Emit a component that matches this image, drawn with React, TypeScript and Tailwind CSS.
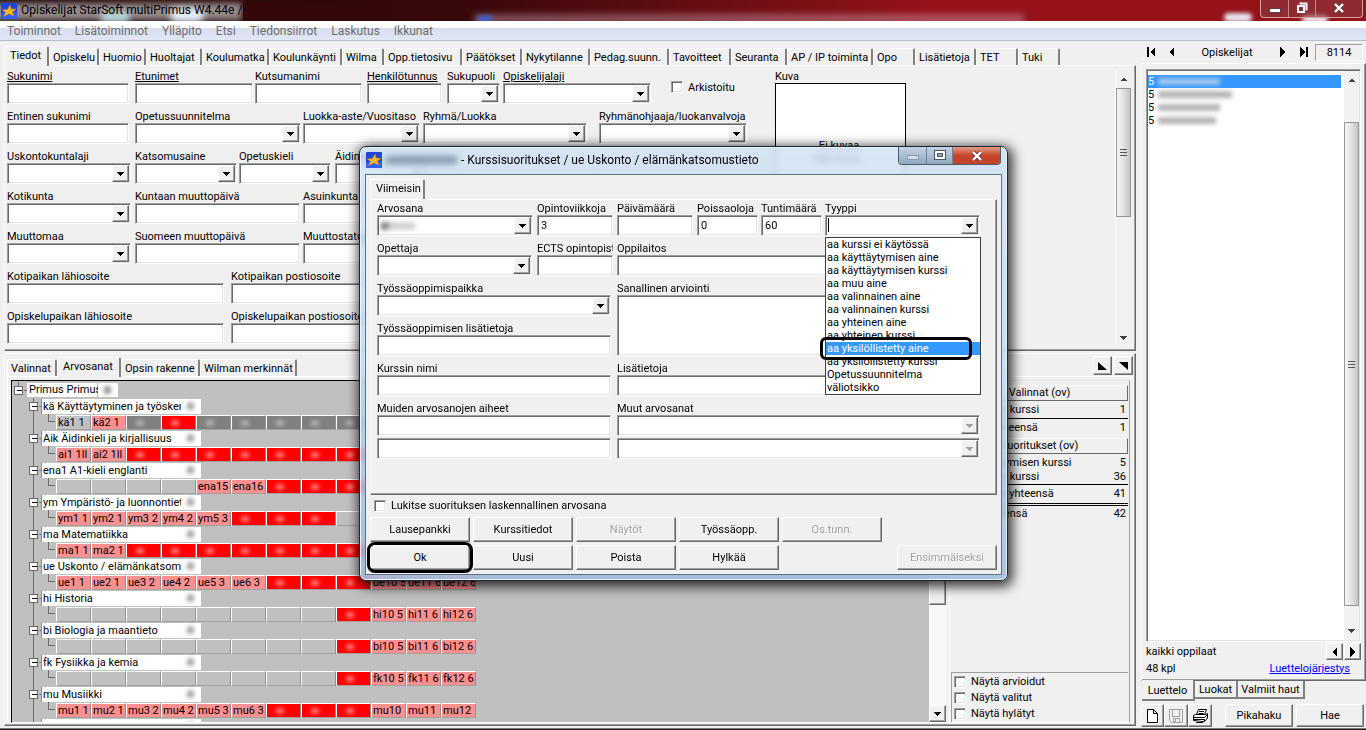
import React, { useId, useState } from 'react';
import clsx from 'clsx';

const SUNKEN = 'border border-t-[#a0a0a0] border-l-[#a0a0a0] border-r-white border-b-white shadow-[inset_1px_1px_#696969,inset_-1px_-1px_#e3e3e3]';
const RAISED = 'border border-t-white border-l-white border-r-[#696969] border-b-[#696969] shadow-[inset_-1px_-1px_#a0a0a0]';

const mainTabs = [
  { label: 'Opiskelu', w: 'w-[50px]' },
  { label: 'Huomio', w: 'w-[47px]' },
  { label: 'Huoltajat', w: 'w-[56px]' },
  { label: 'Koulumatka', w: 'w-[67px]' },
  { label: 'Koulunkäynti', w: 'w-[73px]' },
  { label: 'Wilma', w: 'w-[42px]' },
  { label: 'Opp.tietosivu', w: 'w-[78px]' },
  { label: 'Päätökset', w: 'w-[60px]' },
  { label: 'Nykytilanne', w: 'w-[68px]' },
  { label: 'Pedag.suunn.', w: 'w-[79px]' },
  { label: 'Tavoitteet', w: 'w-[62px]' },
  { label: 'Seuranta', w: 'w-[56px]' },
  { label: 'AP / IP toiminta', w: 'w-[86px]' },
  { label: 'Opo', w: 'w-[42px]' },
  { label: 'Lisätietoja', w: 'w-[61px]' },
  { label: 'TET', w: 'w-[42px]' },
  { label: 'Tuki', w: 'w-[42px]' },
];

const typeOptions = [
  'aa kurssi ei käytössä',
  'aa käyttäytymisen aine',
  'aa käyttäytymisen kurssi',
  'aa muu aine',
  'aa valinnainen aine',
  'aa valinnainen kurssi',
  'aa yhteinen aine',
  'aa yhteinen kurssi',
  'aa yksilöllistetty aine',
  'aa yksilöllistetty kurssi',
  'Opetussuunnitelma',
  'väliotsikko',
];

// '' = empty slot, '#' = completed (red), '=' = disabled (grey), anything else is a course
const subjects = [
  { name: 'kä Käyttäytyminen ja työskentely', cells: ['kä1 1', 'kä2 1', '=', '#', '=', '=', '=', '=', '='] },
  { name: 'Aik Äidinkieli ja kirjallisuus', cells: ['ai1 1ll', 'ai2 1ll', '#', '#', '#', '#', '#', '#', '#'] },
  { name: 'ena1 A1-kieli englanti', cells: ['', '', '', '', 'ena15', 'ena16', '#', '#', '#'] },
  { name: 'ym Ympäristö- ja luonnontieto', cells: ['ym1 1', 'ym2 1', 'ym3 2', 'ym4 2', 'ym5 3', '#', '#', '#', ''] },
  { name: 'ma Matematiikka', cells: ['ma1 1', 'ma2 1', '#', '#', '#', '#', '#', '#', '#'] },
  { name: 'ue Uskonto / elämänkatsomustieto', cells: ['ue1 1', 'ue2 1', 'ue3 2', 'ue4 2', 'ue5 3', 'ue6 3', '#', '#', '#', 'ue10 5', 'ue11 6', 'ue12 6'] },
  { name: 'hi Historia', cells: ['', '', '', '', '', '', '', '', '#', 'hi10 5', 'hi11 6', 'hi12 6'] },
  { name: 'bi Biologia ja maantieto', cells: ['', '', '', '', '', '', '', '', '#', 'bi10 5', 'bi11 6', 'bi12 6'] },
  { name: 'fk Fysiikka ja kemia', cells: ['', '', '', '', '', '', '', '', '#', 'fk10 5', 'fk11 6', 'fk12 6'] },
  { name: 'mu Musiikki', cells: ['mu1 1', 'mu2 1', 'mu3 2', 'mu4 2', 'mu5 3', 'mu6 3', '#', '#', '#', 'mu10', 'mu11', 'mu12'] },
  { name: '', cells: [] },
];

function StarIcon() {
  return (
    <svg width="16" height="16" viewBox="0 0 16 16" className="shrink-0">
      <rect x="0" y="0" width="16" height="16" rx="1" fill="#1f45d8" />
      <path d="M0 11 Q8 6 16 10 V16 H0 Z" fill="#2f62ee" />
      <path d="M9 2 L10 6 L15 6.4 L11.2 9 L13 13 L8.2 10.8 L2.6 13.4 L4.8 9.4 L1.4 7 L6.6 6.4 Z" fill="#ffb820" stroke="#e08a10" strokeWidth="0.5" />
    </svg>
  );
}

function Arrow({ dir, className }: { dir: 'up' | 'down' | 'left' | 'right'; className?: string }) {
  const d = {
    up: 'M0 4 L7 4 L3.5 0.5 Z',
    down: 'M0 0 L7 0 L3.5 4 Z',
    left: 'M5 0 L5 10 L0 5 Z',
    right: 'M0 0 L0 10 L5 5 Z',
  }[dir];
  const flat = dir === 'up' || dir === 'down';
  return (
    <svg width={flat ? 7 : 5} height={flat ? 4 : 10} className={clsx('shrink-0', className)} shapeRendering="crispEdges">
      <path d={d} fill="currentColor" />
    </svg>
  );
}

function ArrowBar({ dir }: { dir: 'left' | 'right' }) {
  return (
    <svg width="8" height="10" className="shrink-0" shapeRendering="crispEdges">
      {dir === 'left' ? <path d="M0 0 H2 V10 H0 Z M8 0 V10 L3 5 Z" /> : <path d="M6 0 H8 V10 H6 Z M0 0 V10 L5 5 Z" />}
    </svg>
  );
}

interface FieldProps {
  label: string;
  cell: string;
  combo?: boolean;
  underline?: boolean;
  value?: string;
  disabled?: boolean;
  masked?: boolean;
}

function ComboBox({ id, label, disabled, masked }: { id?: string; label?: string; disabled?: boolean; masked?: boolean }) {
  return (
    <span className={clsx('relative flex h-[21px] w-full bg-white p-px', SUNKEN)}>
      <select id={id} aria-label={label} disabled={disabled} className="min-w-0 flex-1 appearance-none bg-transparent px-px outline-none" />
      {masked && <i className="pointer-events-none absolute top-[6px] left-[3px] h-[8px] w-[34px] bg-linear-to-r from-[#8c8080] from-15% to-[#d4d4d4] to-30% blur-[2px]" />}
      <span className={clsx('pointer-events-none flex w-[17px] items-center justify-center bg-[#f0f0f0]', RAISED, disabled ? 'text-[#a0a0a0]' : 'text-black')}>
        <Arrow dir="down" />
      </span>
    </span>
  );
}

function Field({ label, cell, combo, underline, value, disabled, masked }: FieldProps) {
  const id = useId();
  return (
    <div className={clsx('flex shrink-0 flex-col', cell)}>
      <label htmlFor={id} className={clsx('h-[13px] overflow-hidden whitespace-nowrap', underline && 'underline')}>{label}</label>
      {combo ? (
        <ComboBox id={id} disabled={disabled} masked={masked} />
      ) : (
        <input id={id} defaultValue={value} className={clsx('h-[21px] w-full bg-white px-[3px] outline-none', SUNKEN)} />
      )}
    </div>
  );
}

function CheckBox({ label, className }: { label: string; className?: string }) {
  return (
    <label className={clsx('flex items-center whitespace-nowrap', className)}>
      <input type="checkbox" className={clsx('mr-[5px] h-[12px] w-[12px] shrink-0 appearance-none bg-white', SUNKEN)} />
      {label}
    </label>
  );
}

function Button({ children, className, disabled }: { children: React.ReactNode; className?: string; disabled?: boolean }) {
  return (
    <button
      disabled={disabled}
      className={clsx('flex items-center justify-center bg-[#f0f0f0]', RAISED, disabled && 'text-[#a0a0a0] [text-shadow:1px_1px_white]', className)}
    >
      {children}
    </button>
  );
}

function Tab({ children, active, className }: { children: React.ReactNode; active?: boolean; className?: string }) {
  return (
    <button
      role="tab"
      aria-selected={!!active}
      className={clsx(
        'shrink-0 overflow-hidden whitespace-nowrap rounded-t-[2px] border-t border-l border-r-2 border-t-white border-l-white border-r-[#808080] bg-[#f0f0f0] text-left',
        active ? 'relative -mb-px h-[20px] px-[5px] pb-[2px]' : 'h-[17px] px-[3px]',
        className
      )}
    >
      {children}
    </button>
  );
}

function ScrollBar({ thumb, offset }: { thumb: string; offset?: string }) {
  return (
    <div className="flex w-[15px] shrink-0 flex-col items-center bg-[#f1f1f1] text-[#404040]">
      <span className="flex h-[18px] items-center"><Arrow dir="up" /></span>
      <span className={clsx('flex w-full flex-col items-center justify-center gap-[2px] border border-[#979797] bg-linear-to-r from-[#f5f5f5] via-[#e2e2e4] to-[#c4c4c8]', thumb, offset)}>
        <i className="h-px w-[7px] bg-[#555]" />
        <i className="h-px w-[7px] bg-[#555]" />
        <i className="h-px w-[7px] bg-[#555]" />
      </span>
      <span className="mt-auto flex h-[18px] items-center"><Arrow dir="down" /></span>
    </div>
  );
}

function TitleBar() {
  return (
    <header className="relative flex h-[22px] shrink-0 items-center overflow-hidden border-b border-white bg-linear-to-r from-[#1c0506] from-0% via-[#3a080b] via-35% to-[#961219] to-68%">
      <div className="absolute -left-2 top-[3px] h-[17px] w-[250px] bg-[#a8a2a2]/85 blur-[3px]" />
      <div className="absolute left-[100px] top-[12px] h-[10px] w-[30px] rounded-full bg-[#b9dbe0] blur-[3px]" />
      <div className="absolute left-[170px] top-[8px] h-[14px] w-[34px] rounded-full bg-[#e4ecfa] blur-[3px]" />
      <div className="absolute left-[474px] top-[14px] h-[10px] w-[550px] bg-[#c9a0b4]/45 blur-[3px]" />
      <div className="absolute left-[478px] top-[16px] h-[6px] w-[14px] bg-[#3f62d8] blur-[2px]" />
      <div className="absolute left-[1224px] top-[13px] h-[9px] w-[28px] rounded-full bg-[#e8e6f4] blur-[2px]" />
      <div className="absolute left-[1302px] top-[15px] h-[8px] w-[26px] rounded-full bg-[#f0e6ee] blur-[2px]" />
      <div className="relative flex items-center gap-[4px] pl-px text-[12px] text-black">
        <StarIcon />
        <h1 className="w-[218px] whitespace-nowrap">Opiskelijat StarSoft multiPrimus W4.44e /</h1>
        <span className="mt-[2px] h-[20px] w-[132px] bg-[#34070a]" />
      </div>
      <div className="relative mr-[3px] mb-[4px] ml-auto flex h-[18px] overflow-hidden rounded-b-[4px] border border-t-0 border-[#d8a0a4] bg-[#8a3a40]/60">
        <button aria-label="Pienennä" className="flex w-[28px] items-center justify-center border-r border-[#c88a8e] pt-[4px]">
          <svg width="12" height="5"><rect x="0.5" y="0.5" width="11" height="4" fill="#fff" stroke="#5b3a42" /></svg>
        </button>
        <button aria-label="Palauta" className="flex w-[27px] items-center justify-center border-r border-[#c88a8e]">
          <svg width="12" height="12" fill="none"><path d="M3.5 1.5 H10.5 V8.5" stroke="#fff" strokeWidth="2" /><rect x="2" y="4" width="6" height="6" stroke="#fff" strokeWidth="2" /><rect x="4" y="6" width="2" height="2" fill="#5b3a42" /></svg>
        </button>
        <button aria-label="Sulje" className="flex w-[46px] items-center justify-center">
          <svg width="12" height="10"><path d="M2 1 L10 9 M10 1 L2 9" stroke="#5b3a42" strokeWidth="4" /><path d="M2 1 L10 9 M10 1 L2 9" stroke="#fff" strokeWidth="2.4" /></svg>
        </button>
      </div>
    </header>
  );
}

function StudentForm() {
  return (
    <section className={clsx('flex pt-[4px] pl-[2px]', RAISED)}>
      <div className="w-[768px] shrink-0 overflow-hidden">
        <div className="flex h-[40px]">
          <Field label="Sukunimi" cell="w-[128px] pr-[6px]" underline />
          <Field label="Etunimet" cell="w-[120px] pr-[2px]" underline />
          <Field label="Kutsumanimi" cell="w-[112px] pr-[5px]" />
          <Field label="Henkilötunnus" cell="w-[80px] pr-[5px]" underline />
          <Field label="Sukupuoli" cell="w-[56px] pr-[3px]" combo />
          <Field label="Opiskelijalaji" cell="w-[168px] pr-[20px]" combo underline />
          <CheckBox label="Arkistoitu" className="mb-[6px]" />
        </div>
        <div className="flex h-[40px]">
          <Field label="Entinen sukunimi" cell="w-[128px] pr-[6px]" />
          <Field label="Opetussuunnitelma" cell="w-[168px] pr-[2px]" combo />
          <Field label="Luokka-aste/Vuositaso" cell="w-[120px] pr-[3px]" combo />
          <Field label="Ryhmä/Luokka" cell="w-[176px] pr-[12px]" combo />
          <Field label="Ryhmänohjaaja/luokanvalvoja" cell="w-[148px]" combo />
        </div>
        <div className="flex h-[40px]">
          <Field label="Uskontokuntalaji" cell="w-[128px] pr-[4px]" combo />
          <Field label="Katsomusaine" cell="w-[104px] pr-[2px]" combo />
          <Field label="Opetuskieli" cell="w-[96px] pr-[4px]" combo />
          <Field label="Äidinkieli" cell="w-[96px] pr-[4px]" combo />
        </div>
        <div className="flex h-[40px]">
          <Field label="Kotikunta" cell="w-[128px] pr-[4px]" combo />
          <Field label="Kuntaan muuttopäivä" cell="w-[168px] pr-[3px]" />
          <Field label="Asuinkunta" cell="w-[128px] pr-[4px]" />
        </div>
        <div className="flex h-[40px]">
          <Field label="Muuttomaa" cell="w-[128px] pr-[4px]" combo />
          <Field label="Suomeen muuttopäivä" cell="w-[168px] pr-[3px]" />
          <Field label="Muuttostatus" cell="w-[128px] pr-[4px]" />
        </div>
        <div className="flex h-[40px]">
          <Field label="Kotipaikan lähiosoite" cell="w-[224px] pr-[7px]" />
          <Field label="Kotipaikan postiosoite" cell="w-[224px] pr-[7px]" />
        </div>
        <div className="flex h-[40px]">
          <Field label="Opiskelupaikan lähiosoite" cell="w-[224px] pr-[7px]" />
          <Field label="Opiskelupaikan postiosoite" cell="w-[224px] pr-[7px]" />
        </div>
      </div>
      <div className="w-[131px] shrink-0">
        <p className="h-[13px]">Kuva</p>
        <div className="flex h-[110px] flex-col items-center justify-center border border-black bg-white pt-[28px]">
          <span>Ei kuvaa.</span>
          <span>Hae kuva...</span>
        </div>
      </div>
      <div className="mr-[4px] mb-[3px] ml-auto flex border-l border-white">
        <ScrollBar thumb="h-[129px]" />
      </div>
    </section>
  );
}

function Toggle({ root }: { root?: boolean }) {
  const x = root ? 2.5 : 17.5;
  return (
    <svg width={root ? 15 : 29} height="16" className="shrink-0" fill="none" shapeRendering="crispEdges">
      {!root && <path d="M21.5 0 V16" stroke="#696969" />}
      {root && <path d="M6.5 0 V4" stroke="#696969" />}
      <path d={`M${x + 9} 8.5 H${x + 12}`} stroke="#696969" />
      <rect x={x} y="4.5" width="8" height="8" fill="#fff" stroke="#696969" />
      <path d={`M${x + 2} 8.5 H${x + 7}`} stroke="#000" />
    </svg>
  );
}

function Cell({ value }: { value: string }) {
  const empty = value === '';
  const done = value === '#';
  const off = value === '=';
  return (
    <span
      className={clsx(
        'h-[15px] w-[35px] shrink-0 overflow-hidden whitespace-nowrap border border-t-white border-l-white border-r-[#909090] border-b-[#a0a0a0] pl-px leading-[14px]',
        empty && 'bg-[#c0c0c0]',
        done && 'bg-[#ff0000]',
        off && 'bg-[#808080]',
        !empty && !done && !off && (value === 'kä1 1' ? 'bg-[#c0c0c0]' : 'bg-[#ff9090]')
      )}
    >
      {done || off ? (
        <i className={clsx('ml-[8px] mt-[4px] block h-[6px] w-[8px] rounded-full blur-[2px]', done ? 'bg-[#ff8080]' : 'bg-[#b5b5b5]')} />
      ) : value}
    </span>
  );
}

function GradeTree() {
  return (
    <div className="flex min-w-0 flex-1 border-t border-b border-l border-t-black border-b-white border-l-black bg-[#c0c0c0]">
      <div className="min-h-0 flex-1 overflow-hidden pt-px">
        <div className="flex h-[16px] items-center">
          <Toggle root />
          <span className="h-[14px] w-[70px] whitespace-nowrap bg-white pl-[2px]">Primus Primus</span>
          <span className="ml-px flex h-[14px] w-[20px] items-center bg-white pl-[6px]"><i className="h-[8px] w-[7px] rounded-full bg-[#8a8a8a] blur-[2px]" /></span>
        </div>
        {subjects.map((s, i) => (
          <React.Fragment key={i}>
            <div className="flex h-[16px] items-center">
              <Toggle />
              <span className="h-[15px] w-[140px] overflow-hidden whitespace-nowrap border-l border-[#909090] bg-white pl-px leading-[15px]">{s.name}</span>
              <span className="flex h-[15px] w-[20px] items-center bg-white pl-[6px]"><i className="h-[8px] w-[7px] rounded-full bg-[#a0a0a8] blur-[2px]" /></span>
            </div>
            <div className="flex h-[16px] items-center">
              <svg width="44" height="16" className="shrink-0" fill="none" stroke="#696969" shapeRendering="crispEdges">
                <path d="M21.5 0 V16 M36.5 0 V7.5 H43" />
              </svg>
              {s.cells.map((c, j) => <Cell key={j} value={c} />)}
            </div>
          </React.Fragment>
        ))}
      </div>
      <div className="flex w-[17px] flex-col bg-[#f8f8f8]">
        <button aria-label="Ylös" className={clsx('flex h-[17px] items-center justify-center bg-[#f0f0f0]', RAISED)}><Arrow dir="up" /></button>
        <span className={clsx('h-[207px] bg-[#f0f0f0]', RAISED)} />
        <button aria-label="Alas" className={clsx('mt-auto flex h-[17px] items-center justify-center bg-[#f0f0f0]', RAISED)}><Arrow dir="down" /></button>
      </div>
    </div>
  );
}

function SummaryRow({ name, count, className }: { name: string; count: number; className?: string }) {
  return (
    <tr className={className}>
      <td className="p-0">{name}</td>
      <td className="p-0 pr-[2px] text-right">{count}</td>
    </tr>
  );
}

function Summary() {
  return (
    <aside className="mr-[3px] ml-[3px] flex w-[181px] shrink-0 flex-col border border-t-[#e3e3e3] border-l-white border-r-[#a0a0a0] border-b-white px-px pt-[4px]">
      <h2 className="h-[16px] border border-t-white border-l-white border-r-[#696969] border-b-[#696969] text-center">Valinnat (ov)</h2>
      <table className="mt-px w-full border-collapse leading-[13px]">
        <tbody>
          <SummaryRow name="aa yhteinen kurssi" count={1} className="h-[16px] border-b border-black" />
          <SummaryRow name="Valinnat yhteensä" count={1} className="h-[19px]" />
        </tbody>
      </table>
      <h2 className="mt-px h-[16px] border border-t-white border-l-white border-r-[#696969] border-b-[#696969] text-center">Suoritukset (ov)</h2>
      <table className="mt-[2px] w-full border-collapse leading-[13px]">
        <tbody>
          <SummaryRow name="aa käyttäytymisen kurssi" count={5} className="h-[13px]" />
          <SummaryRow name="aa yhteinen kurssi" count={36} className="h-[15px] border-b border-black" />
          <SummaryRow name="Suoritukset yhteensä" count={41} className="h-[20px] border-b-3 border-double border-black" />
          <SummaryRow name="Kaikki yhteensä" count={42} className="h-[18px]" />
        </tbody>
      </table>
      <div className="mt-auto flex flex-col gap-[3px] border-t border-l border-[#a0a0a0] py-[2px] pl-[2px]">
        <CheckBox label="Näytä arvioidut" className="h-[13px]" />
        <CheckBox label="Näytä valitut" className="h-[13px]" />
        <CheckBox label="Näytä hylätyt" className="h-[13px]" />
      </div>
    </aside>
  );
}

function StudentList() {
  const blurred = ['w-[62px]', 'w-[74px]', 'w-[62px]', 'w-[58px]'];
  return (
    <aside className="flex w-[225px] shrink-0 flex-col pt-[2px]">
      <div className="flex h-[18px] items-center pr-[3px] pl-[6px]">
        <button aria-label="Ensimmäinen"><ArrowBar dir="left" /></button>
        <button aria-label="Edellinen" className="ml-[14px]"><Arrow dir="left" /></button>
        <span className="flex-1 text-center">Opiskelijat</span>
        <button aria-label="Seuraava" className="mr-[15px]"><Arrow dir="right" /></button>
        <button aria-label="Viimeinen" className="mr-[7px]"><ArrowBar dir="right" /></button>
        <span className="h-[17px] w-[48px] border border-t-[#a0a0a0] border-l-[#a0a0a0] border-r-white border-b-white text-center leading-[16px]">8114</span>
      </div>
      <div className={clsx('mt-[2px] flex min-h-0 flex-1 flex-col px-[4px] pt-[5px] pb-[4px]', RAISED)}>
        <div className={clsx('flex min-h-0 flex-1 bg-white p-px', SUNKEN)}>
          <ul className="min-w-0 flex-1 pt-[4px] pr-[3px]">
            {blurred.map((w, i) => (
              <li key={i} className={clsx('flex h-[13px] items-center gap-[4px]', i === 0 && 'bg-[#3399ff] text-white')}>
                5
                <i className={clsx('flex h-[7px] blur-[2px]', w, i === 0 ? 'bg-[#a3c6ee]' : 'bg-[#b4b4b4]')} />
              </li>
            ))}
          </ul>
          <ScrollBar thumb="flex-1" offset="mt-[33px] mb-[16px]" />
        </div>
        <div className="mt-px flex h-[17px] items-center">
          <span className="flex-1">kaikki oppilaat</span>
          <Button className="h-[17px] w-[17px]"><Arrow dir="left" /></Button>
          <Button className="ml-px h-[17px] w-[17px]"><Arrow dir="right" /></Button>
        </div>
        <div className="flex h-[16px] items-center justify-between pr-[11px]">
          <span>48 kpl</span>
          <a href="#jarjestys" className="text-[#0000ff] underline">Luettelojärjestys</a>
        </div>
      </div>
      <div className="flex h-[21px] pl-px" role="tablist">
        <button role="tab" aria-selected="true" className="relative -mt-px h-[21px] w-[53px] border-r-2 border-b-2 border-[#808080] bg-[#f0f0f0] pt-[2px]">Luettelo</button>
        <button role="tab" aria-selected="false" className="h-[18px] w-[43px] border-r-2 border-b-2 border-[#808080]">Luokat</button>
        <button role="tab" aria-selected="false" className="h-[18px] w-[67px] border-r-2 border-b-2 border-[#808080]">Valmiit haut</button>
      </div>
      <div className="mt-px flex h-[25px] items-center pr-[2px]">
        <Button className="h-[23px] w-[23px]">
          <svg width="11" height="14" fill="#fff" stroke="#000"><path d="M0.5 0.5 H6.5 L10.5 4.5 V13.5 H0.5 Z M6.5 0.5 V4.5 H10.5" /></svg>
        </Button>
        <Button className="h-[23px] w-[24px]" disabled>
          <svg width="14" height="14" fill="none" stroke="#a0a0a0"><path d="M0.5 0.5 H13.5 V13.5 H2.5 L0.5 11.5 Z M3.5 0.5 V7.5 H10.5 V0.5 M4.5 13.5 V9.5 H10.5 V13.5 M6.5 10 V13" /></svg>
        </Button>
        <Button className="h-[23px] w-[24px]">
          <svg width="16" height="14" fill="#fff" stroke="#000"><path d="M4.5 5.5 L6.5 0.5 H14.5 L12.5 5.5" /><path d="M7 2.5 H12 M6.5 4.5 H11.5" /><path d="M1.5 6.5 L3.5 5.5 H13.5 L15.5 4.5 V9 L12.5 12.5 L1.5 11.5 Z" /><path d="M1 8.5 H12.5 L15 6 M1 10.5 H12.5 V12" /><path d="M4 13.5 H11" /></svg>
        </Button>
        <Button className="ml-[13px] h-[23px] flex-1">Pikahaku</Button>
        <Button className="ml-[3px] h-[23px] flex-1">Hae</Button>
      </div>
    </aside>
  );
}

function CourseDialog() {
  const [selected, setSelected] = useState('aa yksilöllistetty aine');
  const typeId = useId();
  const noteId = useId();
  return (
    <div
      role="dialog"
      aria-label="Kurssisuoritukset"
      className="absolute top-[146px] left-[359px] w-[649px] rounded-[7px] border border-[#1f262d] bg-linear-to-b from-[#cfe0f2]/80 via-[#bddcfb]/85 to-[#9fbcdc]/85 px-[5px] pb-[5px] shadow-[2px_3px_12px_3px_rgba(0,0,0,0.75),inset_0_0_0_1px_#e8f4ff] backdrop-blur-[3px]"
    >
      <div className="flex h-[27px] items-start">
        <div className="flex h-[26px] items-center gap-[4px] pl-px text-[12px]">
          <StarIcon />
          <i className="h-[8px] w-[71px] bg-[#8296ac] blur-[3px]" />
          <h2 className="whitespace-nowrap">- Kurssisuoritukset / ue Uskonto / elämänkatsomustieto</h2>
        </div>
        <div className="mr-px ml-auto flex h-[18px] overflow-hidden rounded-b-[4px] border border-t-0 border-[#4c5d70]">
          <button aria-label="Pienennä" className="flex w-[28px] items-center justify-center border-r border-[#6e8298] bg-linear-to-b from-[#c2d2e2] to-[#93a9c0] pt-[4px]">
            <svg width="12" height="5"><rect x="0.5" y="0.5" width="11" height="4" fill="#d4dde6" stroke="#8a9cae" /></svg>
          </button>
          <button aria-label="Suurenna" className="flex w-[26px] items-center justify-center border-r border-[#6e8298] bg-linear-to-b from-[#c2d2e2] to-[#93a9c0]">
            <svg width="12" height="11"><rect x="0.5" y="0.5" width="11" height="9" fill="#fff" stroke="#4a5563" /><rect x="3.5" y="3.5" width="5" height="3" fill="#93a9c0" stroke="#4a5563" /></svg>
          </button>
          <button aria-label="Sulje" className="flex w-[47px] items-center justify-center bg-linear-to-b from-[#e09a86] via-[#c8452c] to-[#c1422a]">
            <svg width="12" height="10"><path d="M2 1 L10 9 M10 1 L2 9" stroke="#5b3a42" strokeWidth="4" /><path d="M2 1 L10 9 M10 1 L2 9" stroke="#fff" strokeWidth="2.4" /></svg>
          </button>
        </div>
      </div>
      <div className="border border-[#5f7080] bg-[#f0f0f0] px-[4px] pt-[4px] pb-[4px]">
        <div className="flex h-[20px]" role="tablist">
          <Tab active className="w-[55px]">Viimeisin</Tab>
        </div>
        <div className={clsx('min-h-[296px] pt-[2px] pl-[6px]', RAISED)}>
          <div className="flex h-[40px]">
            <Field label="Arvosana" cell="w-[160px] pr-[4px]" combo masked />
            <Field label="Opintoviikkoja" cell="w-[80px] pr-[4px]" value="3" />
            <Field label="Päivämäärä" cell="w-[80px] pr-[4px]" />
            <Field label="Poissaoloja" cell="w-[64px] pr-[3px]" value="0" />
            <Field label="Tuntimäärä" cell="w-[64px] pr-[3px]" value="60" />
            <div className="relative w-[155px] shrink-0">
              <label htmlFor={typeId} className="block h-[13px]">Tyyppi</label>
              <ComboBox id={typeId} />
              <i className="absolute top-[16px] left-[3px] h-[14px] w-px bg-black" />
              <ul role="listbox" aria-label="Tyyppi" className="absolute top-[35px] left-0 z-10 w-[156px] border border-[#404040] bg-white">
                {typeOptions.map(o => (
                  <li
                    key={o}
                    role="option"
                    aria-selected={o === selected}
                    onClick={() => setSelected(o)}
                    className={clsx('h-[13px] whitespace-nowrap pl-px', o === selected && 'bg-[#3399ff] text-white')}
                  >
                    {o}
                  </li>
                ))}
              </ul>
              <span className="pointer-events-none absolute top-[135px] -left-[5px] z-20 h-[23px] w-[152px] rounded-[6px] border-3 border-black" />
            </div>
          </div>
          <div className="flex h-[40px]">
            <Field label="Opettaja" cell="w-[160px] pr-[5px]" combo />
            <Field label="ECTS opintopisteet" cell="w-[80px] pr-[4px]" />
            <Field label="Oppilaitos" cell="w-[363px]" />
          </div>
          <div className="flex">
            <div className="w-[240px] shrink-0">
              <div className="flex h-[40px]"><Field label="Työssäoppimispaikka" cell="w-[234px]" combo /></div>
              <div className="flex h-[40px]"><Field label="Työssäoppimisen lisätietoja" cell="w-[234px]" /></div>
              <div className="flex h-[40px]"><Field label="Kurssin nimi" cell="w-[234px]" /></div>
              <div className="flex h-[36px]"><Field label="Muiden arvosanojen aiheet" cell="w-[234px]" /></div>
              <input aria-label="Muu aihe" className={clsx('h-[21px] w-[234px] bg-white outline-none', SUNKEN)} />
            </div>
            <div className="w-[363px] shrink-0">
              <div className="flex h-[80px] flex-col">
                <label htmlFor={noteId} className="h-[13px]">Sanallinen arviointi</label>
                <textarea id={noteId} className={clsx('h-[61px] resize-none bg-white outline-none', SUNKEN)} />
              </div>
              <div className="flex h-[40px]"><Field label="Lisätietoja" cell="w-[363px]" /></div>
              <div className="flex h-[36px]"><Field label="Muut arvosanat" cell="w-[363px]" combo disabled /></div>
              <ComboBox label="Muu arvosana" disabled />
            </div>
          </div>
        </div>
        <CheckBox label="Lukitse suorituksen laskennallinen arvosana" className="mt-[4px] ml-[4px] h-[13px]" />
        <div className="mt-[5px] flex gap-[3px]">
          <Button className="h-[25px] w-[100px]">Lausepankki</Button>
          <Button className="h-[25px] w-[100px]">Kurssitiedot</Button>
          <Button className="h-[25px] w-[100px]" disabled>Näytöt</Button>
          <Button className="h-[25px] w-[100px]">Työssäopp.</Button>
          <Button className="h-[25px] w-[100px]" disabled>Os.tunn.</Button>
        </div>
        <div className="mt-[3px] flex gap-[3px]">
          <span className="relative">
            <Button className="h-[25px] w-[100px]">Ok</Button>
            <span className="pointer-events-none absolute -inset-[3px] rounded-[8px] border-3 border-black" />
          </span>
          <Button className="h-[25px] w-[100px]">Uusi</Button>
          <Button className="h-[25px] w-[100px]">Poista</Button>
          <Button className="h-[25px] w-[100px]">Hylkää</Button>
          <Button className="ml-auto h-[25px] w-[100px]" disabled>Ensimmäiseksi</Button>
        </div>
      </div>
    </div>
  );
}

export default function App() {
  return (
    <div className="relative flex h-screen w-full flex-col overflow-hidden bg-[#f0f0f0] font-['Roboto','Liberation_Sans',sans-serif] text-[11px] leading-[13px] text-black">
      <TitleBar />
      <nav className="flex h-[19px] shrink-0 items-center gap-[14px] border-b border-[#b6bccc] bg-linear-to-b from-white from-30% via-[#d8deee] via-35% to-[#e2e7f6] pl-[7px] text-[12px] text-[#6d6d6d]">
        {['Toiminnot', 'Lisätoiminnot', 'Ylläpito', 'Etsi', 'Tiedonsiirrot', 'Laskutus', 'Ikkunat'].map(m => (
          <button key={m}>{m}</button>
        ))}
      </nav>
      <div className="flex min-h-0 flex-1">
        <main className="mr-[5px] flex min-w-0 flex-1 flex-col pt-[5px] pb-[2px] pl-[4px]">
          <div className="flex h-[19px] shrink-0 items-end" role="tablist">
            <Tab active className="w-[45px]">Tiedot</Tab>
            {mainTabs.map(t => <Tab key={t.label} className={t.w}>{t.label}</Tab>)}
          </div>
          <StudentForm />
          <div className={clsx('mt-[2px] flex min-h-0 flex-1 flex-col px-[2px] pb-[2px]', RAISED)}>
            <div className="flex h-[22px] shrink-0 items-end" role="tablist">
              <Tab className="w-[50px]">Valinnat</Tab>
              <Tab active className="w-[64px]">Arvosanat</Tab>
              <Tab className="w-[79px]">Opsin rakenne</Tab>
              <Tab className="w-[97px]">Wilman merkinnät</Tab>
              <span className="mb-px ml-auto flex gap-[2px]">
                <Button className="h-[19px] w-[19px]"><svg width="9" height="8"><path d="M0 0 L9 8 H0 Z" /></svg></Button>
                <Button className="h-[19px] w-[19px]"><svg width="9" height="8"><path d="M0 0 H9 V8 Z" /></svg></Button>
              </span>
            </div>
            <div className="flex min-h-0 flex-1 border-t border-l border-white pt-[3px] pl-[3px]">
              <GradeTree />
              <Summary />
            </div>
          </div>
        </main>
        <StudentList />
      </div>
      <footer className="h-[2px] shrink-0 border-t border-[#777] bg-[#2b2026]" />
      <CourseDialog />
    </div>
  );
}
